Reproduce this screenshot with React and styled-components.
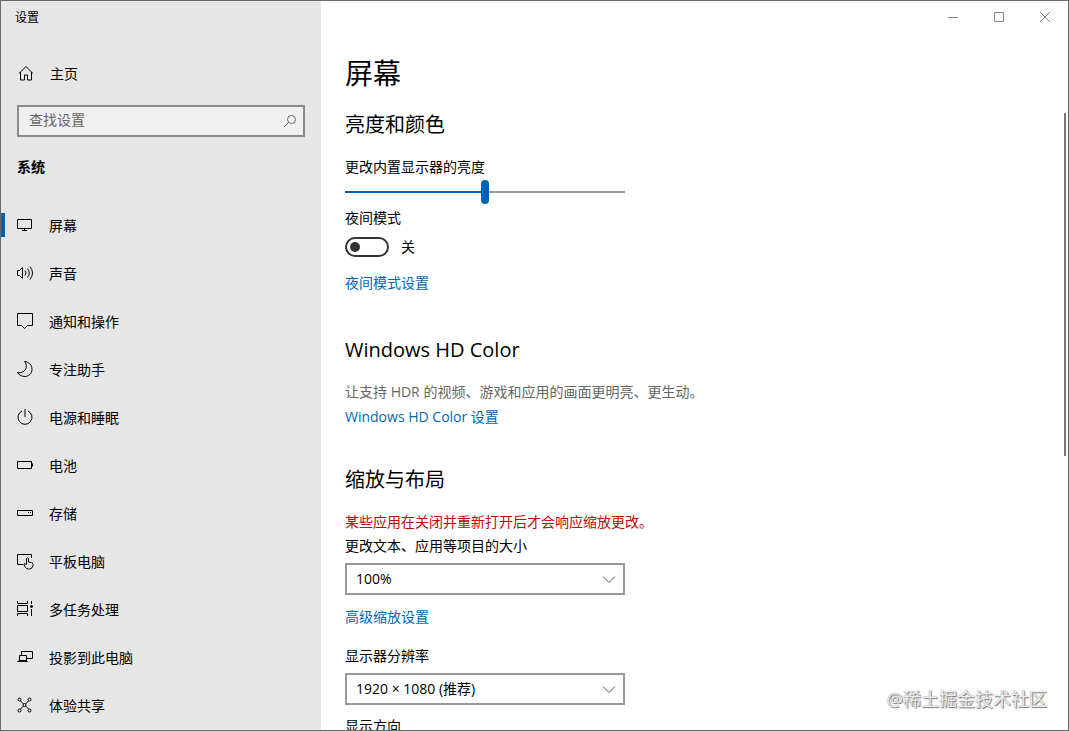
import React, { useState } from "react";
import styled, { createGlobalStyle } from "styled-components";

const GlobalStyle = createGlobalStyle`
  *, *::before, *::after { box-sizing: border-box; }
  body {
    margin: 0;
    color: #000;
    background: #fff;
    font: 14px/20px "Open Sans", "Noto Sans CJK SC", sans-serif;
  }
  h1, h2, p { margin: 0; font-weight: 400; }
  button, input, select { font: inherit; color: inherit; }
`;

const Window = styled.div`
  position: relative;
  display: flex;
  height: 100vh;
  overflow: hidden;
  border: 1px solid #6b6b6b;
  background: #fff;
`;

const Sidebar = styled.aside`
  flex: 0 0 320px;
  background: #e6e6e6;
`;

const WindowTitle = styled.div`
  height: 32px;
  padding-left: 14px;
  font-size: 12px;
  line-height: 34px;
`;

const Icon = styled.svg`
  flex: none;
  width: 18px;
  height: 18px;
  fill: none;
  stroke: ${(p) => p.$color || "#000"};
  stroke-width: 1;
`;

const NavLink = styled.a`
  position: relative;
  display: flex;
  align-items: center;
  gap: 15px;
  height: 48px;
  padding-left: 15px;
  color: #000;
  text-decoration: none;

  &[aria-current]::before {
    content: "";
    position: absolute;
    left: 0;
    top: 12px;
    width: 4px;
    height: 24px;
    background: #0063b1;
  }
`;

const NavText = styled.span`
  padding-top: 2px;
`;

const HomeLink = styled(NavLink)`
  margin-top: 16px;
  padding-left: 16px;
`;

const SearchBox = styled.form`
  display: flex;
  height: 32px;
  margin: 8px 16px 0;
  border: 2px solid #8a8a8a;
  background: #f0f0f0;
`;

const SearchInput = styled.input`
  flex: 1;
  min-width: 0;
  padding: 0 10px 2px;
  border: 0;
  outline: 0;
  background: transparent;
  &::placeholder { color: #666; opacity: 1; }
`;

const SearchButton = styled.button`
  display: grid;
  place-items: center;
  width: 26px;
  padding: 0;
  border: 0;
  background: transparent;
`;

const GroupTitle = styled.h2`
  margin: 20px 16px 24px;
  font-size: 14px;
  font-weight: 700;
  line-height: 20px;
`;

const Main = styled.main`
  flex: 1;
  min-width: 0;
  overflow: hidden;
`;

const Controls = styled.div`
  display: flex;
  justify-content: flex-end;
  height: 32px;
`;

const ControlButton = styled.button`
  display: grid;
  place-items: center;
  width: 46px;
  padding: 0;
  border: 0;
  background: transparent;
`;

const Content = styled.div`
  padding: 20px 24px 0;
`;

const PageTitle = styled.h1`
  font-size: 28px;
  line-height: 40px;
`;

const Section = styled.section`
  display: flex;
  flex-direction: column;
  align-items: flex-start;
  padding-top: ${(p) => p.$top}px;
`;

const SectionTitle = styled.h2`
  margin-bottom: 18px;
  font-size: 20px;
  line-height: 28px;
`;

const Label = styled.label``;

const Description = styled.p`
  margin-bottom: 5px;
  color: #666;
`;

const Warning = styled.p`
  margin-bottom: 4px;
  color: #c50500;
`;

const Link = styled.a`
  color: #0067b3;
  text-decoration: none;
`;

const Slider = styled.input`
  appearance: none;
  width: 280px;
  height: 24px;
  margin: 3px 0 4px;
  background: linear-gradient(
    to right,
    #0063b1 ${(p) => p.$value}%,
    #999 ${(p) => p.$value}%
  ) center / 100% 2px no-repeat;

  &::-webkit-slider-thumb {
    appearance: none;
    width: 8px;
    height: 24px;
    border-radius: 4px;
    background: #0063b1;
  }
`;

const ToggleRow = styled.div`
  display: flex;
  align-items: center;
  gap: 12px;
  margin: 9px 0 16px;
`;

const Toggle = styled.input`
  appearance: none;
  display: flex;
  align-items: center;
  width: 44px;
  height: 20px;
  margin: 0;
  padding: 0 3px;
  border: 2px solid #333;
  border-radius: 10px;

  &::before {
    content: "";
    width: 10px;
    height: 10px;
    border-radius: 50%;
    background: #333;
  }
  &:checked { justify-content: flex-end; }
`;

const SelectBox = styled.div`
  display: grid;
  align-items: center;
  width: 280px;
  margin: 7px 0 ${(p) => p.$bottom}px;

  & > * { grid-area: 1 / 1; }
  & > svg {
    justify-self: end;
    margin-right: 7px;
    pointer-events: none;
  }
`;

const Select = styled.select`
  appearance: none;
  width: 100%;
  height: 32px;
  padding: 0 32px 0 9px;
  border: 2px solid #999;
  border-radius: 0;
  background: #fff;
`;

const Scrollbar = styled.div`
  position: absolute;
  top: 112px;
  right: 2px;
  width: 2px;
  height: 47%;
  background: #767676;
`;

const Watermark = styled.div`
  position: absolute;
  right: 21px;
  bottom: 19px;
  color: #eee;
  font-size: 18px;
  line-height: 24px;
  text-shadow: 1px 1px 1px #777, 0 0 1px #777;
`;

const navItems = [
  ["屏幕", <path d="M1.5 3.5h14v9h-14zM8.5 12.5v2M6 14.5h5" />],
  ["声音", <path d="M1.5 6.5h2l3-3v11l-3-3h-2zM9 6.5q2 2.5 0 5M11.5 4.5q3.5 4.5 0 9M14 2.5q5 6.5 0 13" />],
  ["通知和操作", <path d="M1.5 1.5h15v12h-5l-3 3-3-3h-4z" />],
  ["专注助手", <path d="M8.5 1.5C13 2 16 5 16 9.5C16 13.500 12.5 16.5 9 16.5C5.5 16.5 3 15 1.5 12.5C5 13.5 9.5 11.5 10.2 7.5C10.5 5 10 3 8.5 1.5Z" />],
  ["电源和睡眠", <path d="M6 3a7 7 0 1 0 6 0M9 1v8" />],
  ["电池", <path d="M1.5 5.5h14v7h-14zM16.5 7.5v3" />],
  ["存储", <path d="M1.5 6.5h15v5h-15zM12 8.5h1M14 8.5h1" />],
  ["平板电脑", <path d="M7 12.5H1.5v-10h14V6M10.5 12.5V6.500q1-1.500 2 0V10l3 .5q1.500.5 1.500 2v1q-.5 3-3.500 3.500h-1q-2 0-3-1.500l-1.500-2.500q0-1.500 1-1.500l1.500 1.500" />],
  ["多任务处理", <><path d="M1.5 1v2.5h10V1M1.5 5.5h10v6h-10zM1.5 16v-2.5h10V16M15.5 1v3M15.5 9v7" /><circle cx="15.5" cy="6.500" r="1" fill="#000" /></>],
  ["投影到此电脑", <path d="M5.5 7V3.5h11v7h-6M3.5 7.5h7v5h-7zM3.500 12.500l-2 1h10l-1-1" />],
  ["体验共享", <><path d="M4.5 5l3 3M12.5 5l-3 3M4.5 13l3-3M12.5 13l-3-3" /><circle cx="3.500" cy="3.500" r="1.500" /><circle cx="13.500" cy="3.500" r="1.500" /><circle cx="8.500" cy="9" r="1.500" /><circle cx="3.500" cy="14.500" r="1.500" /><circle cx="13.500" cy="14.500" r="1.500" /></>],
];

function DropDown({ id, bottom, options }) {
  return (
    <SelectBox $bottom={bottom}>
      <Select id={id}>
        {options.map((o) => <option key={o}>{o}</option>)}
      </Select>
      <Icon viewBox="0 0 18 18" $color="#555" aria-hidden="true">
        <path d="M3 6.5l6 6 6-6" />
      </Icon>
    </SelectBox>
  );
}

export default function App() {
  const [brightness, setBrightness] = useState(50);
  const [night, setNight] = useState(false);

  return (
    <>
      <GlobalStyle />
      <Window>
        <Sidebar>
          <WindowTitle>设置</WindowTitle>
          <HomeLink href="#home">
            <Icon viewBox="0 0 18 18" aria-hidden="true">
              <path d="M2 9.5l7-7 7 7M3.5 8v8h4v-5h3v5h4V8" />
            </Icon>
            <NavText>主页</NavText>
          </HomeLink>
          <SearchBox role="search" onSubmit={(e) => e.preventDefault()}>
            <SearchInput type="text" placeholder="查找设置" aria-label="查找设置" />
            <SearchButton aria-label="查找设置">
              <Icon viewBox="0 0 18 18" $color="#666" aria-hidden="true">
                <circle cx="10.5" cy="7.5" r="4" />
                <path d="M7.5 10.5L3 15" />
              </Icon>
            </SearchButton>
          </SearchBox>
          <GroupTitle>系统</GroupTitle>
          <nav>
            {navItems.map(([name, icon], i) => (
              <NavLink key={name} href="#" aria-current={i === 0 ? "page" : undefined}>
                <Icon viewBox="0 0 18 18" aria-hidden="true">{icon}</Icon>
                <NavText>{name}</NavText>
              </NavLink>
            ))}
          </nav>
        </Sidebar>

        <Main>
          <Controls>
            <ControlButton aria-label="最小化">
              <Icon viewBox="0 0 18 18" $color="#888"><path d="M4 9.5h10" /></Icon>
            </ControlButton>
            <ControlButton aria-label="最大化">
              <Icon viewBox="0 0 18 18" $color="#888"><path d="M4.5 4.5h9v9h-9z" /></Icon>
            </ControlButton>
            <ControlButton aria-label="关闭">
              <Icon viewBox="0 0 18 18" $color="#777"><path d="M4 4l10 10M14 4L4 14" /></Icon>
            </ControlButton>
          </Controls>
          <Content>
            <PageTitle>屏幕</PageTitle>

            <Section $top={18}>
              <SectionTitle>亮度和颜色</SectionTitle>
              <Label htmlFor="brightness">更改内置显示器的亮度</Label>
              <Slider
                id="brightness"
                type="range"
                value={brightness}
                $value={brightness}
                onChange={(e) => setBrightness(Number(e.target.value))}
              />
              <Label htmlFor="night">夜间模式</Label>
              <ToggleRow>
                <Toggle
                  id="night"
                  type="checkbox"
                  role="switch"
                  checked={night}
                  onChange={(e) => setNight(e.target.checked)}
                />
                <span>{night ? "开" : "关"}</span>
              </ToggleRow>
              <Link href="#night">夜间模式设置</Link>
            </Section>

            <Section $top={43}>
              <SectionTitle>Windows HD Color</SectionTitle>
              <Description>让支持 HDR 的视频、游戏和应用的画面更明亮、更生动。</Description>
              <Link href="#hdr">Windows HD Color 设置</Link>
            </Section>

            <Section $top={39}>
              <SectionTitle>缩放与布局</SectionTitle>
              <Warning>某些应用在关闭并重新打开后才会响应缩放更改。</Warning>
              <Label htmlFor="scale">更改文本、应用等项目的大小</Label>
              <DropDown id="scale" bottom={12} options={["100%", "125%", "150%"]} />
              <Link href="#scaling">高级缩放设置</Link>
            </Section>

            <Section $top={19}>
              <Label htmlFor="resolution">显示器分辨率</Label>
              <DropDown id="resolution" bottom={11} options={["1920 × 1080 (推荐)", "1600 × 900"]} />
              <Label htmlFor="orientation">显示方向</Label>
              <DropDown id="orientation" bottom={12} options={["横向", "纵向"]} />
            </Section>
          </Content>
        </Main>
        <Scrollbar />
        <Watermark>@稀土掘金技术社区</Watermark>
      </Window>
    </>
  );
}
